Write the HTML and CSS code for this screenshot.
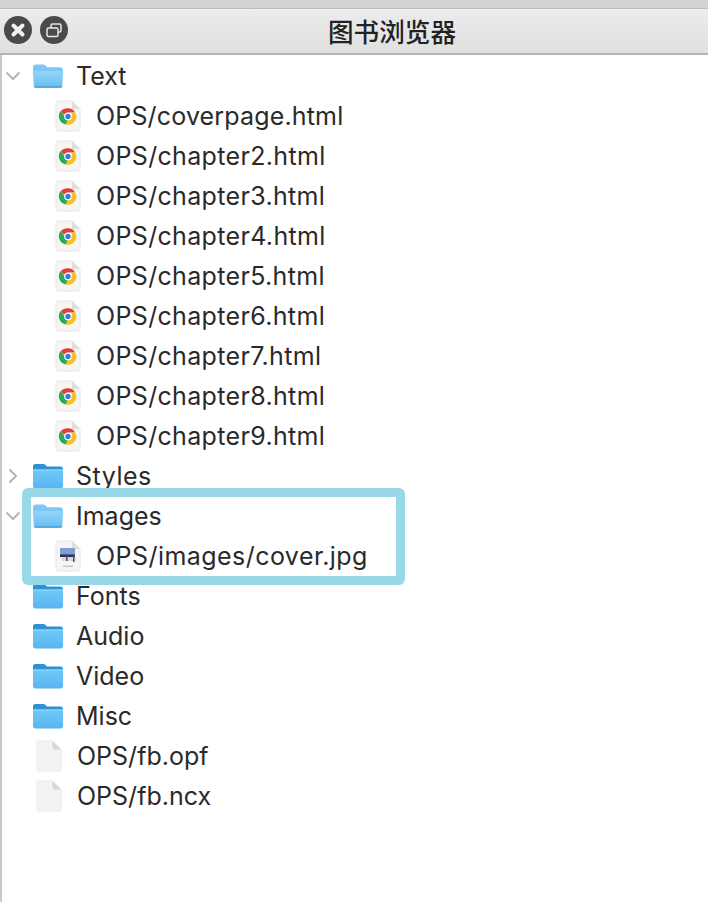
FILE: index.html
```html
<!DOCTYPE html>
<html lang="zh">
<head>
<meta charset="utf-8">
<title>图书浏览器</title>
<link rel="stylesheet" href="styles.css">
</head>
<body>
<svg class="defs" width="0" height="0" aria-hidden="true">
  <defs>
    <linearGradient id="fTop" x1="0" y1="0" x2="0" y2="1"><stop offset="0" stop-color="#93d5f8"/><stop offset="1" stop-color="#66bdf0"/></linearGradient>
    <linearGradient id="fBlue" x1="0" y1="0" x2="0" y2="1"><stop offset="0" stop-color="#72c8f8"/><stop offset="1" stop-color="#55b5ee"/></linearGradient>
    <symbol id="open" viewBox="0 0 32 26">
      <path d="M1 4.500C1 2.500 2 1.500 4 1.500h7c1.500 0 2.200.5 3 1.500l1 1.200h13c2 0 3 1 3 3V9H1z" fill="#7cc8f5"/>
      <path d="M2.500 8h27c1 0 1.800.8 1.700 2l-1 12.500c-.1 1.500-1 2.500-2.500 2.500H4.300c-1.500 0-2.400-1-2.500-2.500L.8 10c-.1-1.200.7-2 1.700-2z" fill="url(#fTop)"/>
      <path d="M4 25h24c1.500 0 2.400-1 2.500-2H1.800c.1 1 1 2 2.200 2z" fill="#55a9df"/>
    </symbol>
    <symbol id="closed" viewBox="0 0 32 26">
      <path d="M1 3.500C1 2 2 1 3.500 1H11c1.500 0 2 .5 3 1.500L15 3.500h13.500c1.500 0 2.500 1 2.500 2.500v2H1z" fill="#2a93d8"/>
      <path d="M1 6.500h30V23c0 1.500-1 2.500-2.500 2.500h-25C2 25.500 1 24.500 1 23z" fill="url(#fBlue)"/>
      <path d="M1 6.500h30V7.500H1z" fill="#96daf9"/>
    </symbol>
    <symbol id="page" viewBox="0 0 26 32">
      <path d="M2.500 1H17l8 8v20c0 1-.7 2-2 2H3c-1.300 0-2-1-2-2V2.500C1 1.700 1.700 1 2.500 1z" fill="#f5f5f5" stroke="#e6e6e6"/>
      <path d="M17 1v6.500c0 1 .6 1.500 1.500 1.500H25z" fill="#dedede"/>
    </symbol>
    <symbol id="chrome" viewBox="0 0 26 32">
      <use href="#page" width="26" height="32"/>
      <path d="M13 8.300a8.200 8.200 0 0 1 7.100 4.100H13a4.100 4.100 0 0 0-3.900 2.800L6 10.800A8.200 8.200 0 0 1 13 8.300z" fill="#e2402f"/>
      <path d="M6 10.800l3.500 6A4.100 4.100 0 0 0 13 20.600l-2.200 3.800A8.200 8.200 0 0 1 6 10.800z" fill="#2fa84f"/>
      <path d="M20.100 12.400a8.200 8.200 0 0 1-9.300 12l3.500-6.100a4.100 4.100 0 0 0 1.900-5.900z" fill="#fbc116"/>
      <circle cx="13" cy="16.500" r="3.200" fill="#2f7de1" stroke="#fff" stroke-width="1.100"/>
    </symbol>
    <symbol id="jpg" viewBox="0 0 26 32">
      <use href="#page" width="26" height="32"/>
      <rect x="5" y="8" width="15" height="8" rx="1" fill="#7f9ddc"/>
      <rect x="5" y="14.500" width="15" height="2.500" fill="#2a3348"/>
      <rect x="7" y="17" width="14" height="4" fill="#d5d9e0"/>
      <rect x="11" y="15" width="1.500" height="6" fill="#4a5268"/>
      <rect x="18" y="15" width="1.500" height="7" fill="#4a5268"/>
      <rect x="8" y="25.500" width="10" height="1.500" fill="#c4c4c4"/>
    </symbol>
    <symbol id="plain" viewBox="0 0 26 32">
      <path d="M2.500 1H16.500L25 9.500V29c0 1-.7 2-2 2H3c-1.300 0-2-1-2-2V2.500C1 1.700 1.700 1 2.500 1z" fill="#f3f3f3" stroke="#e8e8e8"/>
      <path d="M16.500 1v6c0 1.500 1 2.500 2.500 2.500H25z" fill="#d6d6d6"/>
    </symbol>
  </defs>
</svg>

<div class="topband"></div>
<header class="titlebar">
  <div class="buttons">
    <button class="winbtn" aria-label="关闭">
      <svg viewBox="0 0 28 28" width="28" height="28"><path d="M9.500 9.500l9 9M18.500 9.500l-9 9" stroke="#f1f1f1" stroke-width="4" stroke-linecap="round"/></svg>
    </button>
    <button class="winbtn" aria-label="浮动">
      <svg viewBox="0 0 28 28" width="28" height="28"><rect x="11" y="8" width="10" height="8" rx="1.500" fill="none" stroke="#e8e8e8" stroke-width="1.500"/><rect x="7" y="12" width="11" height="8.500" rx="1.500" fill="#4a4a4a" stroke="#e8e8e8" stroke-width="1.500"/></svg>
    </button>
  </div>
  <h1 class="title">图书浏览器</h1>
</header>

<main class="tree">
  <div class="row"><svg class="chev" viewBox="0 0 16 10"><path d="M1.500 1.500L8 8l6.500-6.500"/></svg><svg class="folder"><use href="#open"/></svg><span>Text</span></div>
  <div class="row child"><svg class="file"><use href="#chrome"/></svg><span class="name cover">OPS/coverpage.html</span></div>
  <div class="row child"><svg class="file"><use href="#chrome"/></svg><span class="name">OPS/chapter2.html</span></div>
  <div class="row child"><svg class="file"><use href="#chrome"/></svg><span class="name">OPS/chapter3.html</span></div>
  <div class="row child"><svg class="file"><use href="#chrome"/></svg><span class="name">OPS/chapter4.html</span></div>
  <div class="row child"><svg class="file"><use href="#chrome"/></svg><span class="name">OPS/chapter5.html</span></div>
  <div class="row child"><svg class="file"><use href="#chrome"/></svg><span class="name">OPS/chapter6.html</span></div>
  <div class="row child"><svg class="file"><use href="#chrome"/></svg><span class="name">OPS/chapter7.html</span></div>
  <div class="row child"><svg class="file"><use href="#chrome"/></svg><span class="name">OPS/chapter8.html</span></div>
  <div class="row child"><svg class="file"><use href="#chrome"/></svg><span class="name">OPS/chapter9.html</span></div>
  <div class="row"><svg class="chev" viewBox="0 0 10 16"><path d="M1.500 1.500L8 8l-6.500 6.500"/></svg><svg class="folder"><use href="#closed"/></svg><span class="spaced">Styles</span></div>
  <div class="row"><svg class="chev" viewBox="0 0 16 10"><path d="M1.500 1.500L8 8l6.500-6.500"/></svg><svg class="folder"><use href="#open"/></svg><span>Images</span></div>
  <div class="row child"><svg class="file"><use href="#jpg"/></svg><span class="name wide">OPS/images/cover.jpg</span></div>
  <div class="row"><i class="nochev"></i><svg class="folder"><use href="#closed"/></svg><span>Fonts</span></div>
  <div class="row"><i class="nochev"></i><svg class="folder"><use href="#closed"/></svg><span>Audio</span></div>
  <div class="row"><i class="nochev"></i><svg class="folder"><use href="#closed"/></svg><span>Video</span></div>
  <div class="row"><i class="nochev"></i><svg class="folder"><use href="#closed"/></svg><span>Misc</span></div>
  <div class="row"><i class="nochev"></i><svg class="plainfile"><use href="#plain"/></svg><span>OPS/fb.opf</span></div>
  <div class="row"><i class="nochev"></i><svg class="plainfile"><use href="#plain"/></svg><span>OPS/fb.ncx</span></div>
  <div class="highlight"></div>
</main>
</body>
</html>
```
FILE: styles.css
```css
* { box-sizing: border-box; }
html, body { margin: 0; height: 100%; background: #fff; overflow: hidden; }
body {
  font-family: Inter, "Noto Sans CJK SC", sans-serif;
  color: #2a2a2a;
  display: flex;
  flex-direction: column;
  height: 902px;
}
.defs { position: absolute; }
.topband { height: 9px; background: #d3d3d3; border-bottom: 1px solid #bdbdbd; flex: none; }
.titlebar {
  flex: none;
  height: 46px;
  display: flex;
  align-items: center;
  padding: 0 0 1px 4px;
  background: linear-gradient(#ececec, #e0e0e0);
  border-bottom: 2px solid #b4b4b4;
}
.buttons { display: flex; gap: 8px; flex: none; margin-bottom: 2px; }
.winbtn {
  width: 28px;
  height: 28px;
  padding: 0;
  border: 0;
  border-radius: 50%;
  background: #4a4a4a;
  display: block;
}
.winbtn svg { display: block; }
.title {
  margin: 0;
  flex: 1;
  padding-left: 8px;
  font-family: "Noto Sans CJK SC", sans-serif;
  font-size: 25.6px;
  font-weight: 500;
  line-height: 1;
  text-align: center;
  color: #222;
}
.tree {
  flex: 1;
  position: relative;
  padding-top: 1px;
  border-left: 2px solid #c9c9c9;
}
.row {
  height: 40px;
  display: flex;
  align-items: center;
  font-size: 25px;
  white-space: nowrap;
  padding-left: 2px;
}
.name { letter-spacing: .34px; }
.name.cover { letter-spacing: .16px; }
.name.wide { letter-spacing: .45px; }
.spaced { letter-spacing: .5px; }
.chev { width: 16px; height: 16px; flex: none; fill: none; stroke: #b5b5b5; stroke-width: 2; margin-right: 11px; margin-left: 1px; }
.nochev { width: 28px; flex: none; display: block; }
.folder { width: 32px; height: 26px; flex: none; margin-right: 12px; }
.file { width: 26px; height: 32px; flex: none; margin-left: 51px; margin-right: 15px; }
.plainfile { width: 26px; height: 32px; flex: none; margin-left: 4px; margin-right: 15px; }
.highlight {
  position: absolute;
  left: 20px;
  top: 433px;
  width: 383px;
  height: 97px;
  border: 9px solid #98d8e9;
  border-radius: 6px;
}
```
